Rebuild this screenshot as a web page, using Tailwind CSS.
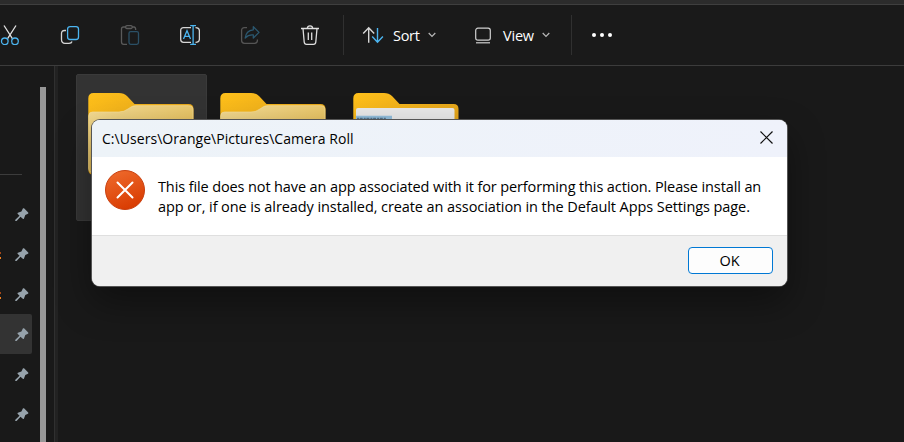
<!DOCTYPE html>
<html lang="en"><head><meta charset="utf-8"><title>Pictures</title>
<script src="https://cdn.jsdelivr.net/npm/@tailwindcss/browser@4"></script></head>
<body class="relative h-[442px] w-[904px] overflow-hidden bg-[#191919] font-['Open_Sans','Noto_Sans',sans-serif] text-[15px]">
<svg class="absolute h-0 w-0"><defs>
<linearGradient id="back" x1="0" y1="0" x2="1" y2="1"><stop stop-color="#ffc01a"/><stop offset=".5" stop-color="#e8a91c"/><stop offset="1" stop-color="#d89a18"/></linearGradient>
<linearGradient id="front" x1="0" y1="0" x2=".6" y2="1"><stop stop-color="#f3dc98"/><stop offset="1" stop-color="#e0b23c"/></linearGradient>
<linearGradient id="err" x1=".2" y1="0" x2=".6" y2="1"><stop stop-color="#ee6a2c"/><stop offset="1" stop-color="#d83b01"/></linearGradient>
<symbol id="pin" viewBox="0 0 14 14"><path fill="#96a2ab" d="M8 .3Q8.700.0 9.300.5L13.200 4.500Q13.700 5.200 13 5.800L10.300 7.100 9 10.500Q8.600 11.500 7.800 10.800L5.500 8.800 1.600 12.900.2 13 .3 11.700 4.500 7.700 2.600 5.800Q2.100 5.100 2.900 4.700L6.400 3.500Z"/></symbol>
<symbol id="folder" viewBox="0 0 106 88"><path fill="url(#back)" d="M.3 5.500Q.3 0 5.500 0H31Q36 0 39 3L46.500 11H100.500Q105.500 11 105.500 16V76Q105.500 82 100 82H6Q.3 82 .3 76Z"/></symbol>
<symbol id="flap" viewBox="0 0 106 88"><path fill="url(#front)" stroke="#f5df9e" stroke-width=".7" d="M.7 23Q.7 19 4.500 19H31Q36 19 40 16L43 14Q45 12.700 48 12.700H100.500Q105 12.700 105 17V75Q105 80 100 80H6Q.7 80 .7 75Z"/></symbol>
</defs></svg>
<div class="flex h-full flex-col">
<div class="h-[5px] shrink-0 border-b border-[#3f3f3f] bg-[#2c2c2c]"></div>
<header class="flex h-[61px] shrink-0 items-center border-b border-[#3c3c3c] bg-[#1a1a1a] text-white">
<div class="-ml-5 flex">
<div class="flex w-[60px] justify-center"><svg width="20" height="20" fill="none" stroke-width="1.3"><path stroke="#e0e0e0" d="M4 .5 12.400 13.700M16 .5 7.600 13.700"/><g stroke="#4cb5f0"><circle cx="4.800" cy="16.300" r="3.300"/><circle cx="15" cy="16.300" r="3.300"/></g></svg></div>
<div class="flex w-[60px] justify-center"><svg width="20" height="20" fill="none" stroke-width="1.3"><path stroke="#d6d6d6" d="M6 5.500H4.500Q1.500 5.500 1.500 8.500V14.500Q1.500 18.300 5 18.300H9Q11.500 18.300 12 16.500"/><rect stroke="#4cb5f0" x="7.600" y="1.600" width="10.900" height="12.900" rx="2.500"/></svg></div>
<div class="flex w-[60px] justify-center"><svg width="20" height="20" fill="none" stroke-width="1.300"><g stroke="#5a5a5a"><path d="M6 2H3.500Q1.500 2 1.500 4V17Q1.500 19.300 3.700 19.300H7M12 2H14Q15.700 2 15.700 5"/><rect x="5.700" y=".7" width="6.500" height="2.800" rx="1.200"/></g><rect stroke="#2b5066" x="9" y="6.600" width="9.500" height="12.700" rx="1.700"/></svg></div>
<div class="flex w-[60px] justify-center"><svg width="20" height="20" fill="none" stroke-width="1.300"><path stroke="#d6d6d6" d="M11 2.700H3.500Q.7 2.700.7 5.500V14.500Q.7 17.300 3.500 17.300H11M15.500 2.700Q19.400 2.700 19.400 6V14Q19.400 17.300 15.500 17.300"/><path stroke="#4cb5f0" d="M10.200.7H16M10.200 19.400H16M13.100.7V19.400M3.500 14 7 5.700 10.500 14M4.700 11.300H9.300"/></svg></div>
<div class="flex w-[60px] justify-center"><svg width="20" height="20" fill="none" stroke-width="1.300" stroke-linejoin="round"><path stroke="#555" d="M7 2.700H4.500Q1.600 2.700 1.600 5.500V15.500Q1.600 18.300 4.500 18.300H14.500Q17.400 18.300 17.400 15.500V14.500"/><path stroke="#2b5870" d="M13.300 1.700 19 7.400 13.300 13V10Q8.500 9.500 5.200 13Q6 5.300 13.300 4.800Z"/></svg></div>
<div class="flex w-[60px] justify-center"><svg width="20" height="20" fill="none" stroke="#dedede" stroke-width="1.300"><path d="M1 3.500H19M7.300 3.300Q7.500.8 10 .8T12.700 3.300M3 3.500 4.200 17Q4.400 19.300 6.500 19.300H13.500Q15.600 19.300 15.800 17L17 3.500M8.300 7.500V15M11.700 7.500V15"/></svg></div>
</div>
<div class="ml-[3px] h-10 w-px bg-[#303030]"></div>
<svg class="ml-[18px]" width="22" height="20" fill="none" stroke-width="1.400"><path stroke="#d6d6d6" d="M6.700 17.700V3M1.200 8.500 6.700 2.700 12.200 8.500"/><path stroke="#4cb5f0" d="M15.500 3V17M10.200 11.500 15.500 17.200 20.900 11.500"/></svg>
<span class="mt-px ml-[9px] w-[35px] text-[14.500px] tracking-[-0.3px]">Sort</span>
<svg width="8" height="6" fill="none" stroke="#b8b8b8" stroke-width="1.200"><path d="M.7 1 4 4.300 7.300 1"/></svg>
<svg class="ml-[39px]" width="16" height="17" fill="none" stroke="#d0d0d0" stroke-width="1.200"><rect x=".7" y="1.200" width="14.600" height="12" rx="2.200"/><path d="M1 15.800H15"/></svg>
<span class="mt-px ml-3 w-[39px] text-[14.500px] tracking-[-0.2px]">View</span>
<svg width="8" height="6" fill="none" stroke="#b8b8b8" stroke-width="1.200"><path d="M.7 1 4 4.300 7.300 1"/></svg>
<div class="ml-[21px] h-10 w-px bg-[#303030]"></div>
<div class="ml-5 flex gap-1"><i class="size-1 rounded-full bg-white"></i><i class="size-1 rounded-full bg-white"></i><i class="size-1 rounded-full bg-white"></i></div>
</header>
<main class="flex min-h-0 flex-1">
<aside class="flex w-[54px] shrink-0">
<div class="w-8 pt-[108px]">
<div class="h-px w-[22px] bg-[#3c3c3c]"></div>
<div class="mt-[19px] flex flex-col">
<div class="flex h-10 items-center pt-0.5 pl-[15px]"><svg width="14" height="14"><use href="#pin"/></svg></div>
<div class="flex h-10 items-center pt-0.5"><i class="flex h-[7px] w-[15px] flex-col justify-between"><b class="h-0.5 w-px bg-[#a34818]"></b><b class="h-0.5 w-px bg-[#f58220]"></b></i><svg width="14" height="14"><use href="#pin"/></svg></div>
<div class="flex h-10 items-center pt-0.5"><i class="flex h-[7px] w-[15px] flex-col justify-between"><b class="h-0.5 w-px bg-[#a34818]"></b><b class="h-0.5 w-px bg-[#f58220]"></b></i><svg width="14" height="14"><use href="#pin"/></svg></div>
<div class="flex h-10 items-center rounded-r-[2px] bg-[#333] pt-0.5 pl-[15px]"><svg width="14" height="14"><use href="#pin"/></svg></div>
<div class="flex h-10 items-center pt-0.5 pl-[15px]"><svg width="14" height="14"><use href="#pin"/></svg></div>
<div class="flex h-10 items-center pt-0.5 pl-[15px]"><svg width="14" height="14"><use href="#pin"/></svg></div>
</div></div>
<div class="mt-[21px] ml-2 w-1.5 bg-[#979797]"></div>
</aside>
<div class="w-1 shrink-0 border-l border-[#303030] bg-[#222]"></div>
<section class="flex items-start pt-2 pl-[18px]">
<div class="h-[147px] w-[131px] rounded-[2px] border border-[#3a3a3a] bg-[#333] pt-[18px] pl-[11px]"><svg width="106" height="88"><use href="#folder"/><use href="#flap"/></svg></div>
<div class="pt-[19px] pl-[13px]"><svg width="106" height="88"><use href="#folder"/><use href="#flap"/></svg></div>
<div class="pt-[19px] pl-[27px]"><svg width="106" height="88"><use href="#folder"/><rect x="3" y="15" width="98.500" height="65" rx="2" fill="#e9e9e9"/><path fill="#93bfdd" d="M3 22.800H39V30H3Z"/><path stroke="#54748c" stroke-dasharray="2 .7 3 1" stroke-width="1.300" d="M4 25.300H33"/></svg></div>
</section>
</main>
</div>
<div class="absolute top-[120px] left-[92px] flex h-[166px] w-[695px] flex-col overflow-hidden rounded-[8px] bg-white text-black shadow-[0_0_0_1px_#555,0_16px_36px_#0006]">
<div class="flex h-[37px] shrink-0 items-center justify-between bg-linear-to-r from-[#edf3f8] to-[#eff2fb] pr-[14px] pl-[10px]"><span class="text-[14px] tracking-[0.05px] whitespace-nowrap">C:\Users\Orange\Pictures\Camera Roll</span><svg width="13" height="13" class="-mt-0.5" stroke="#111" stroke-width="1.200"><path d="M.5.500 12.500 12.500M12.500.5.500 12.500"/></svg></div>
<div class="flex h-[78px] shrink-0 items-start pt-[13px] pl-[13px]"><svg width="40" height="40" fill="none"><circle cx="20" cy="20" r="19.500" fill="url(#err)" stroke="#c84010"/><path stroke="#fff" stroke-width="2" stroke-linecap="round" d="M12.500 12.500 27.500 27.500M27.500 12.500 12.500 27.500"/></svg>
<p class="mt-[7px] ml-[13px] text-[14.500px] leading-5 whitespace-nowrap"><span class="block w-fit tracking-[-0.116px]">This file does not have an app associated with it for performing this action. Please install an</span><span class="block w-fit tracking-[-0.085px]">app or, if one is already installed, create an association in the Default Apps Settings page.</span></p></div>
<div class="flex flex-1 items-start justify-end border-t border-[#dfdfdf] bg-[#f0f0f0] pt-[11px] pr-3.5"><button class="h-[27px] w-[85px] rounded-[4px] border border-[#0078d4] bg-[#fdfdfd] pr-0.5 text-[14.500px] tracking-[-0.2px]">OK</button></div>
</div>
</body></html>
